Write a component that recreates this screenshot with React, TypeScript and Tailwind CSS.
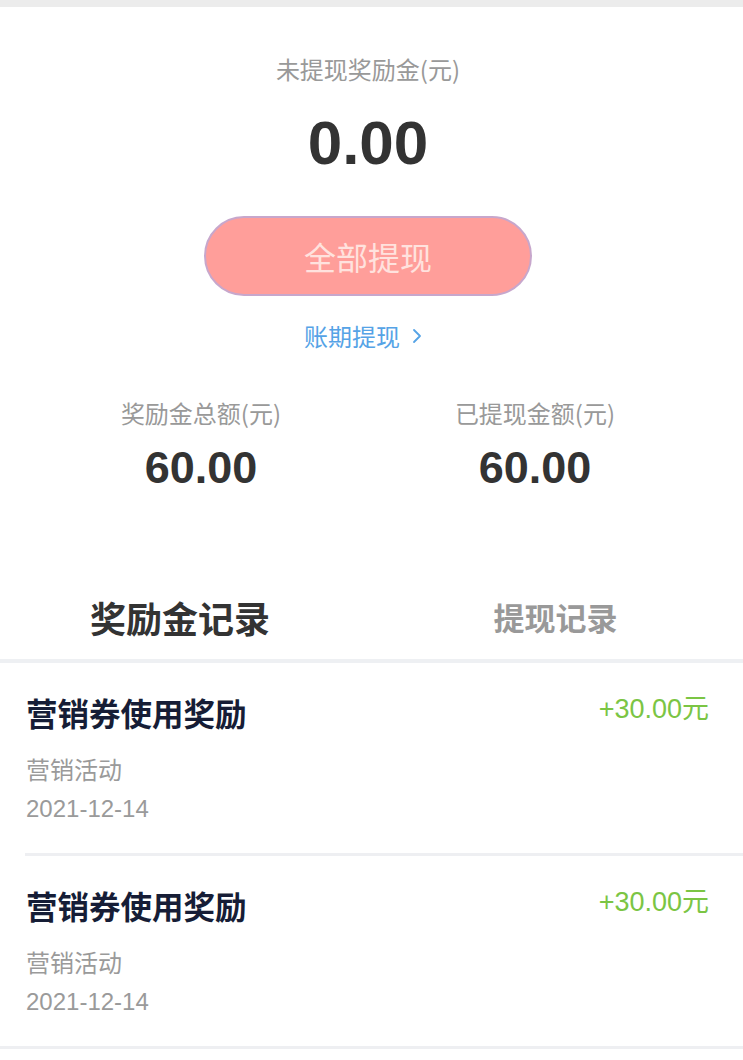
import React from "react";

const cjk = { fontFamily: '"Noto Sans CJK SC", "Noto Sans", sans-serif' };
const num = { fontFamily: '"Liberation Sans", Arial, sans-serif' };

function Record() {
  return (
    <div>
      <div className="h-[190px] pl-[26px] pr-[34px] pt-[29px]">
        <div className="flex justify-between items-start">
          <div className="text-[31.5px] leading-[40px] font-bold text-[#161d36]" style={cjk}>
            营销券使用奖励
          </div>
          <div className="text-[27px] leading-[30px] text-[#7bc544]" style={cjk}>
            <span style={num}>+30.00</span>元
          </div>
        </div>
        <div className="mt-[22px] text-[24px] leading-[30px] text-[#9a9a9a]" style={cjk}>
          营销活动
        </div>
        <div className="mt-[10px] text-[24px] leading-[30px] text-[#9a9a9a]" style={num}>
          2021-12-14
        </div>
      </div>
    </div>
  );
}

export default function App() {
  return (
    <div className="w-[743px] min-h-[1060px] bg-white" style={cjk}>
      <div className="h-[7px] bg-[#ececec]" />
      <div className="pr-[7px]">
        <div className="mt-[47px] text-center text-[24px] leading-[30px] text-[#999999]">
          未提现奖励金(元)
        </div>
        <div className="mt-[24px] text-center text-[62px] leading-[70px] font-bold text-[#333333]" style={num}>
          0.00
        </div>
        <div className="mt-[38px] flex justify-center">
          <div className="w-[328px] h-[80px] rounded-full bg-[#ff9e9a] border-2 border-[#c7a7cc] flex items-center justify-center text-[32px] text-[#ffe2de]">
            全部提现
          </div>
        </div>
        <div className="mt-[25px] pr-[10px] flex justify-center items-center gap-[12px] text-[24px] leading-[30px] text-[#55a3e6]">
          <span>账期提现</span>
          <svg width="10" height="16" viewBox="0 0 10 16" fill="none">
            <polyline points="2,2 8,8 2,14" stroke="#55a3e6" strokeWidth="1.8" strokeLinecap="round" strokeLinejoin="round" />
          </svg>
        </div>
      </div>
      <div className="mt-[47px] grid grid-cols-2 pl-[34px] pr-[41px]">
        <div className="flex flex-col items-center">
          <div className="text-[24px] leading-[30px] text-[#999999]">奖励金总额(元)</div>
          <div className="mt-[15px] text-[45px] leading-[50px] font-bold text-[#333333]" style={num}>
            60.00
          </div>
        </div>
        <div className="flex flex-col items-center">
          <div className="text-[24px] leading-[30px] text-[#999999]">已提现金额(元)</div>
          <div className="mt-[15px] text-[45px] leading-[50px] font-bold text-[#333333]" style={num}>
            60.00
          </div>
        </div>
      </div>
      <div className="mt-[82px] h-[84px] flex items-center">
        <div className="w-[360px] flex justify-center text-[36px] font-bold text-[#333333]">奖励金记录</div>
        <div className="w-[383px] pl-[8px] flex justify-center text-[31px] font-bold text-[#999999]">提现记录</div>
      </div>
      <div className="h-[4px] bg-[#eef0f3]" />
      <Record />
      <div className="ml-[25px] h-[3px] bg-[#eeeff2]" />
      <Record />
      <div className="h-[3px] bg-[#eeeff2]" />
    </div>
  );
}
